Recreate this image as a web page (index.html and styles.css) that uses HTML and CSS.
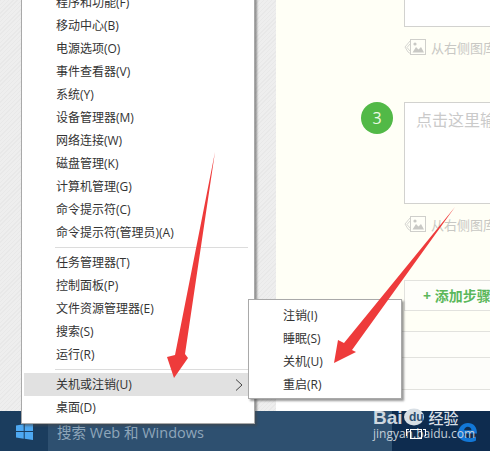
FILE: index.html
```html
<!DOCTYPE html>
<html lang="zh-CN">
<head>
<meta charset="utf-8">
<title>关机或注销</title>
<link rel="stylesheet" href="styles.css">
</head>
<body>
<div class="screen">
  <div class="desktop">
    <div class="gutter"></div>
    <main class="editor">
      <div class="step step-prev">
        <div class="step-body">
          <div class="textbox textbox-cut"></div>
          <div class="picker">
            <svg class="picker-icon" viewBox="0 0 22 18"><path d="M6 3 1 9l3 5 3 2" fill="none" stroke="#d6d6d2"/><path d="M6 6 3 9.500 6 13" fill="none" stroke="#d6d6d2"/><rect x="6.500" y="1.500" width="15" height="15" fill="#fffff8" stroke="#cfcfcb"/><circle cx="11" cy="6" r="1.600" fill="#c9c9c5"/><path d="M8.500 14.500 12 9l2.500 2.500L17 9l3 5.500z" fill="#c9c9c5"/></svg>
            <span>从右侧图库</span>
          </div>
        </div>
      </div>
      <div class="step step-current">
        <div class="badge">3</div>
        <div class="step-body">
          <div class="textbox textbox-full">点击这里输</div>
          <div class="picker">
            <svg class="picker-icon" viewBox="0 0 22 18"><path d="M6 3 1 9l3 5 3 2" fill="none" stroke="#d6d6d2"/><path d="M6 6 3 9.500 6 13" fill="none" stroke="#d6d6d2"/><rect x="6.500" y="1.500" width="15" height="15" fill="#fffff8" stroke="#cfcfcb"/><circle cx="11" cy="6" r="1.600" fill="#c9c9c5"/><path d="M8.500 14.500 12 9l2.500 2.500L17 9l3 5.500z" fill="#c9c9c5"/></svg>
            <span>从右侧图库</span>
          </div>
        </div>
      </div>
      <div class="add-row"><div class="add-step">+ 添加步骤</div></div>
      <div class="band band-a"></div>
      <div class="band band-b"></div>
      <div class="band band-c"></div>
      <div class="band band-d"></div>
    </main>
  </div>
  <footer class="taskbar">
    <div class="start">
      <svg class="win-logo" viewBox="0 0 17 17"><path d="M0 2.500 7.700 1.300V8H0zM8.700 1.200 17 0v8H8.700zM0 9h7.700v6.700L0 14.500zM8.700 9H17v8l-8.300-1.200z" fill="#4ea9f2"/></svg>
    </div>
    <div class="search">搜索 Web 和 Windows</div>
    <div class="tray">
      <svg class="edge-logo" viewBox="0 0 20 19"><path d="M1 11C1 4.500 5.500 0 11 0c5.500 0 9 4 9 10.500H7c.3 3 2.800 4.700 6 4.700 2.300 0 4.300-.6 6-1.700v4c-1.900 1-4.200 1.500-6.800 1.500C5.500 18.500 1 15.800 1 11zm6-3.800h7.500C14.300 5 12.800 3.700 10.800 3.700 9 3.700 7.500 5 7 7.200z" fill="#1277d6"/></svg>
    </div>
  </footer>

  <nav class="menu">
    <ul class="menu-group">
      <li class="menu-item">程序和功能(F)</li>
      <li class="menu-item">移动中心(B)</li>
      <li class="menu-item">电源选项(O)</li>
      <li class="menu-item">事件查看器(V)</li>
      <li class="menu-item">系统(Y)</li>
      <li class="menu-item">设备管理器(M)</li>
      <li class="menu-item">网络连接(W)</li>
      <li class="menu-item">磁盘管理(K)</li>
      <li class="menu-item">计算机管理(G)</li>
      <li class="menu-item">命令提示符(C)</li>
      <li class="menu-item">命令提示符(管理员)(A)</li>
    </ul>
    <ul class="menu-group">
      <li class="menu-item">任务管理器(T)</li>
      <li class="menu-item">控制面板(P)</li>
      <li class="menu-item">文件资源管理器(E)</li>
      <li class="menu-item">搜索(S)</li>
      <li class="menu-item">运行(R)</li>
    </ul>
    <ul class="menu-group menu-group-last">
      <li class="menu-item menu-item-active">关机或注销(U)
        <svg class="chevron" viewBox="0 0 8 12"><path d="M1 .5 7 6l-6 5.500" fill="none" stroke="#444" stroke-width="1"/></svg>
      </li>
      <li class="menu-item">桌面(D)</li>
    </ul>
  </nav>

  <ul class="submenu">
    <li class="menu-item">注销(I)</li>
    <li class="menu-item">睡眠(S)</li>
    <li class="menu-item">关机(U)</li>
    <li class="menu-item">重启(R)</li>
  </ul>

  <svg class="arrows" viewBox="0 0 490 451">
    <path d="M215 152 185 354 188 358 174 378 167 357 175 355Z" fill="#ee3b3b"/>
    <path d="M455 207 352 350 356 352 334 363 338 340 344 343Z" fill="#ee3b3b"/>
  </svg>

  <div class="watermark">
    <div class="wm-top">
      <span class="wm-bai">Bai</span>
      <svg class="wm-paw" viewBox="0 0 22 28">
        <g fill="#fff" fill-opacity=".55"><ellipse cx="5" cy="8" rx="2.300" ry="3"/><ellipse cx="10" cy="4" rx="2.300" ry="3"/><ellipse cx="15" cy="4.500" rx="2.300" ry="3"/><ellipse cx="19" cy="9" rx="2.300" ry="3"/></g>
        <ellipse cx="11" cy="19" rx="10" ry="8.500" fill="#d8dfe5"/>
      </svg>
      <span class="wm-du">du</span>
      <span class="wm-cn">经验</span>
    </div>
    <div class="wm-url">jingyan.baidu.com</div>
  </div>
  <div class="focus-box"></div>
</div>
</body>
</html>
```
FILE: styles.css
```css
* { box-sizing: border-box; }
html, body { margin: 0; padding: 0; }
ul { list-style: none; margin: 0; padding: 0; }

body {
  font-family: "Open Sans", "Noto Sans CJK SC", sans-serif;
  color: #333;
}

.screen {
  position: relative;
  width: 490px;
  height: 451px;
  overflow: hidden;
  display: flex;
  flex-direction: column;
}

.desktop {
  height: 411px;
  display: flex;
}

.gutter {
  width: 276px;
  flex: none;
  background: repeating-linear-gradient(135deg, #e8e8e8 0 1px, #eeeeee 1px 3px);
}

.editor {
  flex: 1;
  min-width: 0;
  background: #fffff6;
  display: flex;
  flex-direction: column;
}

.step {
  display: flex;
  padding-left: 128px;
}

.step-body { width: 86px; flex: none; }

.textbox {
  border: 1px solid #d2d2cf;
  border-right: 0;
  background: #fff;
}

.textbox-cut {
  height: 27px;
  border-top: 0;
}

.textbox-full {
  height: 102px;
  padding: 5px 0 0 11px;
  font-size: 16px;
  line-height: 24px;
  color: #cacaca;
  white-space: nowrap;
  overflow: hidden;
}

.picker {
  display: flex;
  align-items: center;
  gap: 5px;
  height: 18px;
  margin-top: 11px;
  font-size: 13px;
  color: #c8c8c4;
  white-space: nowrap;
  overflow: hidden;
}

.picker-icon { width: 22px; height: 18px; flex: none; }

.step-prev { height: 102px; }

.step-current {
  position: relative;
  height: 178px;
}

.badge {
  position: absolute;
  left: 85px;
  top: 0;
  width: 32px;
  height: 32px;
  border-radius: 50%;
  background: #52b947;
  color: #eefbe6;
  font-size: 16px;
  line-height: 32px;
  text-align: center;
}

.add-row {
  height: 31px;
  padding-left: 128px;
  background: #fffff6;
}

.add-step {
  height: 31px;
  padding-left: 18px;
  border: 1px solid #e2e2de;
  border-right: 0;
  background: #fefefa;
  color: #5cb85c;
  font-size: 14px;
  font-weight: 700;
  line-height: 29px;
  white-space: nowrap;
  overflow: hidden;
}

.band { border-bottom: 1px solid #e2e2de; }
.band-a { height: 21px; background: #fffff6; }
.band-b { height: 26px; background: #fefefa; }
.band-c { height: 32px; background: #fdfdfa; }
.band-d { flex: 1; border-bottom: 0; background: #fff; }

.taskbar {
  height: 40px;
  display: flex;
  background: #2e5070;
}

.start {
  width: 48px;
  flex: none;
  background: #1b3d5e;
  display: flex;
  justify-content: center;
  padding-top: 12px;
}

.win-logo { width: 17px; height: 17px; }

.search {
  flex: 1;
  padding: 11px 0 0 9px;
  font-size: 14.500px;
  line-height: 22px;
  color: #8ea6ba;
}

.tray {
  width: 98px;
  flex: none;
  background: #0e2c4f;
  padding: 12px 0 0 65px;
}

.edge-logo { display: block; width: 20px; height: 19px; }

.menu {
  position: absolute;
  left: 21px;
  bottom: 27px;
  width: 234px;
  background: #fff;
  border: 1px solid #a9a9a9;
  box-shadow: 2px 2px 2px rgba(70, 70, 70, .55);
  padding: 0 6px 4px 2px;
}

.menu-group {
  position: relative;
  padding-bottom: 4px;
  margin-bottom: 3px;
}

.menu-group::after {
  content: "";
  position: absolute;
  left: 31px;
  right: 0;
  bottom: 0;
  border-bottom: 1px solid #dcdcdc;
}

.menu-group-last {
  padding-bottom: 0;
  margin-bottom: 0;
}

.menu-group-last::after { display: none; }

.menu-item {
  height: 23px;
  padding-left: 32px;
  font-size: 12px;
  line-height: 23px;
  white-space: nowrap;
  position: relative;
}

.menu-item-active { background: #e1e1e1; }

.chevron {
  position: absolute;
  right: 5px;
  top: 6px;
  width: 8px;
  height: 12px;
}

.submenu {
  position: absolute;
  left: 248px;
  top: 299px;
  width: 154px;
  height: 100px;
  padding-top: 4px;
  background: #fff;
  border: 1px solid #a9a9a9;
  box-shadow: 2px 2px 2px rgba(70, 70, 70, .55);
}

.submenu .menu-item { padding-left: 34px; }

.arrows {
  position: absolute;
  inset: 0;
  width: 490px;
  height: 451px;
  pointer-events: none;
}

.watermark {
  position: absolute;
  left: 373px;
  top: 398px;
  width: 92px;
  color: #d8dfe5;
  white-space: nowrap;
}

.wm-top {
  position: relative;
  display: flex;
  align-items: flex-end;
  height: 28px;
}

.wm-bai {
  font-family: "Liberation Sans", sans-serif;
  font-size: 19px;
  font-weight: 700;
  line-height: 16px;
  opacity: .95;
}

.wm-paw { width: 22px; height: 28px; margin-left: 0; }

.wm-du {
  position: absolute;
  left: 36px;
  bottom: 2px;
  font-family: "Liberation Sans", sans-serif;
  font-size: 12px;
  font-weight: 700;
  line-height: 13px;
  color: #2e5070;
}

.wm-cn {
  margin-left: 4px;
  font-family: "Noto Sans CJK SC", sans-serif;
  font-size: 15px;
  font-weight: 500;
  line-height: 16px;
}

.wm-url {
  margin-top: 1px;
  font-family: "Open Sans", sans-serif;
  font-size: 12px;
  line-height: 14px;
  color: #c4cfd9;
}

.focus-box {
  position: absolute;
  left: 410px;
  top: 429px;
  width: 12px;
  height: 10px;
  border: 1px solid #fff;
}

.focus-box::before,
.focus-box::after {
  content: "";
  position: absolute;
  top: -1px;
  width: 2px;
  height: 6px;
  border-top: 1px solid #fff;
}

.focus-box::before { left: -5px; border-left: 1px solid #fff; }
.focus-box::after { right: -5px; border-right: 1px solid #fff; }
```
